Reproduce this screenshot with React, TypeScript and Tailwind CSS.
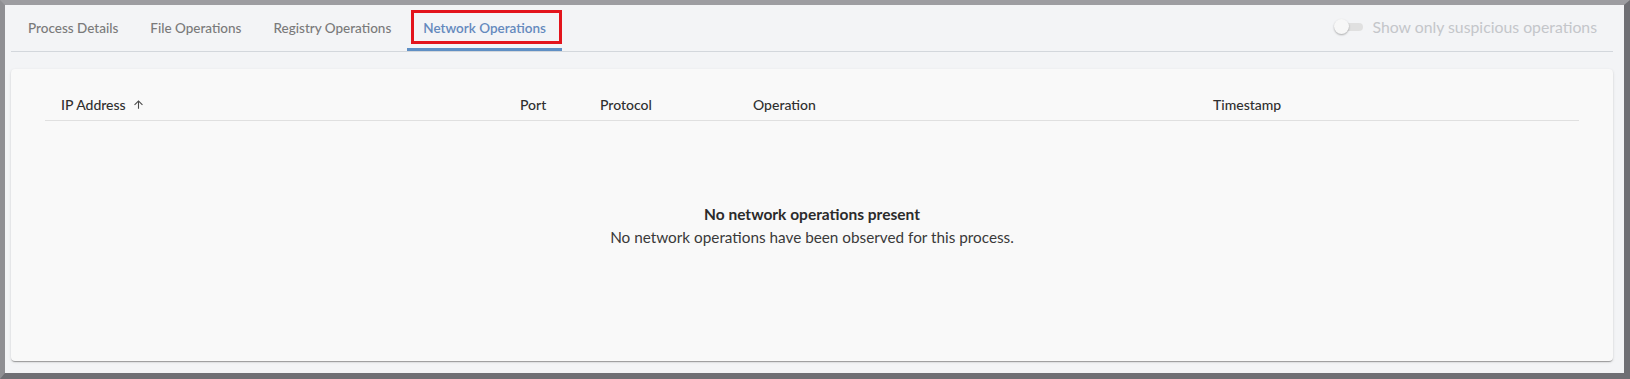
const tabs = [
  { label: "Process Details" },
  { label: "File Operations" },
  { label: "Registry Operations" },
  { label: "Network Operations", active: true },
];

const columns = [
  { label: "IP Address", sorted: true },
  { label: "Port" },
  { label: "Protocol" },
  { label: "Operation" },
  { label: "Timestamp" },
];

function ArrowUpward() {
  return (
    <svg viewBox="0 0 24 24" className="ml-[6px] h-[13px] w-[13px] fill-[#4a4a4a]">
      <path d="M4 12l1.41 1.41L11 7.83V20h2V7.83l5.58 5.59L20 12l-8-8-8 8z" />
    </svg>
  );
}

function Toggle() {
  return (
    <div className="relative h-[16px] w-[30px] shrink-0">
      <div className="absolute left-[7px] top-[4px] h-[8px] w-[22px] rounded-full bg-[#e0e0e0]" />
      <div className="absolute left-0 top-0 h-[15px] w-[15px] rounded-full bg-[#f7f7f7] shadow-[0_1px_2px_rgba(0,0,0,0.3)]" />
    </div>
  );
}

export default function App() {
  return (
    <div className="h-[379px] w-[1630px] border-l-[5px] border-t-[5px] border-r-[6px] border-b-[6px] border-l-[#8f8f93] border-t-[#9d9da1] border-r-[#6f6f74] border-b-[#6f6f74] bg-[#f3f4f6] font-['Lato',sans-serif]">
      <div className="flex flex-col pl-[6px] pr-[11px]">
        <div className="flex h-[47px] items-stretch justify-between border-b border-[#d3d7dc]">
          <div className="flex items-stretch pl-[1px]">
            {tabs.map((t) => (
              <div
                key={t.label}
                className={
                  t.active
                    ? "relative flex items-center px-[16px] text-[13.5px] font-semibold text-[#6489bd]"
                    : "relative flex items-center px-[16px] text-[13.5px] font-medium text-[#7a7a7a]"
                }
              >
                {t.label}
                {t.active && (
                  <>
                    <div className="absolute bottom-0 left-0 right-0 h-[3px] bg-[#5f8fc4]" />
                    <div className="absolute left-[4px] right-0 top-[5px] h-[34px] border-[3px] border-[#e3141c]" />
                  </>
                )}
              </div>
            ))}
          </div>
          <div className="flex items-center gap-[9px] pr-[16px] pb-[2px]">
            <Toggle />
            <span className="text-[15.8px] text-[#c4c6ca]">Show only suspicious operations</span>
          </div>
        </div>

        <div className="mt-[17px] h-[292px] rounded-[4px] bg-[#f9f9f9] px-[34px] pt-[20px] shadow-[0_2px_1px_-1px_rgba(0,0,0,0.2),0_1px_1px_0_rgba(0,0,0,0.14),0_1px_3px_0_rgba(0,0,0,0.12)]">
          <div className="grid h-[32px] grid-cols-[459px_80px_153px_460px_1fr] border-b border-[#e0e0e0] text-[14px] font-medium text-[#2f2f2f]">
            {columns.map((c) => (
              <div key={c.label} className="flex items-center pl-[16px]">
                {c.label}
                {c.sorted && <ArrowUpward />}
              </div>
            ))}
          </div>
          <div className="flex flex-col items-center pt-[83px] text-center">
            <div className="text-[15.5px] font-bold leading-[20px] text-[#2b2b2b]">No network operations present</div>
            <div className="mt-[2px] text-[15.3px] leading-[22px] text-[#3a3a3a]">
              No network operations have been observed for this process.
            </div>
          </div>
        </div>
      </div>
    </div>
  );
}
